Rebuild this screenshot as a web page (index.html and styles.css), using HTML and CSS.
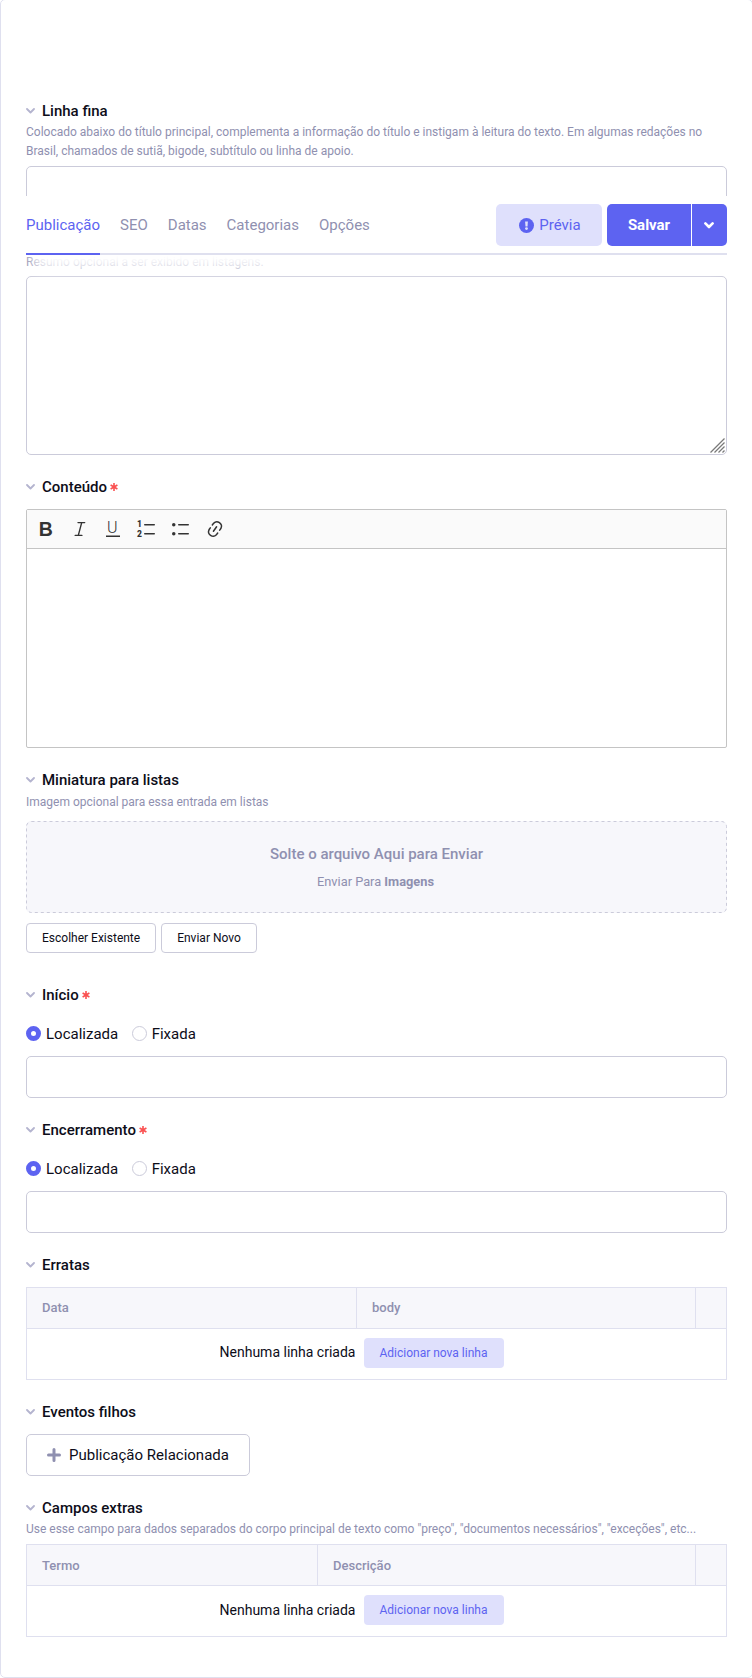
FILE: index.html
```html
<!DOCTYPE html>
<html lang="pt-BR">
<head>
<meta charset="utf-8">
<title>Publicação</title>
<link rel="stylesheet" href="styles.css">
</head>
<body>
<svg class="defs" width="0" height="0">
  <symbol id="chev" viewBox="0 0 9 6"><path d="M1 1l3.5 3.5L8 1" fill="none" stroke="currentColor" stroke-width="1.8" stroke-linecap="round" stroke-linejoin="round"/></symbol>
  <symbol id="req" viewBox="0 0 8 8"><path d="M4 0v8M.6 2l6.8 4M.6 6l6.8-4" fill="none" stroke="currentColor" stroke-width="1.6"/></symbol>
</svg>
<main class="panel">
  <section class="field">
    <h2 class="title"><svg class="chev"><use href="#chev"/></svg>Linha fina</h2>
    <p class="help">Colocado abaixo do título principal, complementa a informação do título e instigam à leitura do texto. Em algumas redações no Brasil, chamados de sutiã, bigode, subtítulo ou linha de apoio.</p>
    <input class="input" type="text">
  </section>

  <section class="field field-summary">
    <p class="help">Resumo opcional a ser exibido em listagens.</p>
    <div class="area-wrap">
      <textarea class="input area"></textarea>
      <svg class="grip" viewBox="0 0 15 15"><path d="M.5 14.5l14-14M4.5 14.5l10-10M8.5 14.5l6-6M12.5 14.5l2-2" fill="none" stroke="#7a7a7a" stroke-width="1.3"/></svg>
    </div>
  </section>

  <section class="field">
    <h2 class="title">
      <svg class="chev"><use href="#chev"/></svg>Conteúdo<svg class="req"><use href="#req"/></svg>
    </h2>
    <div class="editor">
      <div class="toolbar">
        <span class="tool"><svg viewBox="0 0 20 20"><text class="ico-b" x="2.8" y="17">B</text></svg></span>
        <span class="tool"><svg viewBox="0 0 20 20"><path d="M8 3.6h6.7M5.2 16.4h6.7M11.7 3.6L8.3 16.4" fill="none" class="thin"/></svg></span>
        <span class="tool"><svg viewBox="0 0 20 20"><text class="ico-u" x="4.1" y="13.8">U</text><path d="M3 16.5h14V18H3z"/></svg></span>
        <span class="tool"><svg viewBox="0 0 20 20"><text class="ico-n" x="0" y="8">1</text><text class="ico-n" x="0" y="18">2</text><path d="M7.75 5.75h9.5M7.75 14.75h9.5" class="line"/></svg></span>
        <span class="tool"><svg viewBox="0 0 20 20"><circle cx="2.75" cy="5.75" r="1.75"/><circle cx="2.75" cy="14.75" r="1.75"/><path d="M7.75 5.75h9.5M7.75 14.75h9.5" class="line"/></svg></span>
        <span class="tool"><svg viewBox="0 0 20 20"><path d="m11.077 15 .991-1.416a.75.75 0 1 1 1.229.86l-1.148 1.64a.748.748 0 0 1-.217.206 5.251 5.251 0 0 1-8.503-5.955.741.741 0 0 1 .12-.274l1.147-1.639a.75.75 0 1 1 1.228.86L4.933 10.7l.006.003a3.75 3.75 0 0 0 6.132 4.294l.006.004zm5.494-5.335a.748.748 0 0 1-.12.274l-1.147 1.639a.75.75 0 1 1-1.228-.86l.86-1.23a3.75 3.75 0 0 0-6.144-4.301l-.86 1.229a.75.75 0 0 1-1.229-.86l1.148-1.64a.748.748 0 0 1 .217-.206 5.251 5.251 0 0 1 8.503 5.955zm-4.563-2.532a.75.75 0 0 1 .184 1.045l-3.155 4.505a.75.75 0 1 1-1.229-.86l3.155-4.506a.75.75 0 0 1 1.045-.184z"/></svg></span>
      </div>
    </div>
  </section>

  <section class="field">
    <h2 class="title"><svg class="chev"><use href="#chev"/></svg>Miniatura para listas</h2>
    <p class="help help-file">Imagem opcional para essa entrada em listas</p>
    <div class="drop">
      <svg class="dashes" viewBox="0 0 701 92"><rect x=".5" y=".5" width="700" height="91" rx="5" fill="none" stroke="#cbcbda" stroke-dasharray="3 3"/></svg>
      <p class="drop-main">Solte o arquivo Aqui para Enviar</p>
      <p class="drop-sub">Enviar Para <b>Imagens</b></p>
    </div>
    <div class="actions">
      <button class="small">Escolher Existente</button>
      <button class="small">Enviar Novo</button>
    </div>
  </section>

  <section class="field field-after-file">
    <h2 class="title"><svg class="chev"><use href="#chev"/></svg>Início<svg class="req"><use href="#req"/></svg></h2>
    <div class="radios">
      <label class="radio"><i class="dot on"></i>Localizada</label>
      <label class="radio"><i class="dot"></i>Fixada</label>
    </div>
    <input class="input" type="text">
  </section>

  <section class="field">
    <h2 class="title"><svg class="chev"><use href="#chev"/></svg>Encerramento<svg class="req"><use href="#req"/></svg></h2>
    <div class="radios">
      <label class="radio"><i class="dot on"></i>Localizada</label>
      <label class="radio"><i class="dot"></i>Fixada</label>
    </div>
    <input class="input" type="text">
  </section>

  <section class="field">
    <h2 class="title"><svg class="chev"><use href="#chev"/></svg>Erratas</h2>
    <div class="grid">
      <div class="head head-errata"><span>Data</span><span>body</span><span></span></div>
      <div class="row"><span class="empty empty-up">Nenhuma linha criada</span><button class="add">Adicionar nova linha</button></div>
    </div>
  </section>

  <section class="field">
    <h2 class="title"><svg class="chev"><use href="#chev"/></svg>Eventos filhos</h2>
    <button class="relate"><svg class="plus" viewBox="0 0 14 14"><path d="M7 1.5v11M1.5 7h11" fill="none" stroke="currentColor" stroke-width="3" stroke-linecap="round"/></svg>Publicação Relacionada</button>
  </section>

  <section class="field">
    <h2 class="title"><svg class="chev"><use href="#chev"/></svg>Campos extras</h2>
    <p class="help">Use esse campo para dados separados do corpo principal de texto como "preço", "documentos necessários", "exceções", etc...</p>
    <div class="grid">
      <div class="head head-extra"><span>Termo</span><span>Descrição</span><span></span></div>
      <div class="row"><span class="empty">Nenhuma linha criada</span><button class="add">Adicionar nova linha</button></div>
    </div>
  </section>

  <header class="sticky">
    <nav class="tabs">
      <a class="tab active">Publicação</a><a class="tab">SEO</a><a class="tab">Datas</a><a class="tab">Categorias</a><a class="tab">Opções</a>
    </nav>
    <div class="buttons">
      <button class="preview"><svg class="alert" viewBox="0 0 15 15"><circle cx="7.5" cy="7.5" r="7.5" fill="currentColor"/><path d="M6.1 3.5h2.8l-.4 4.9h-2z" fill="#dfe0fc"/><circle cx="7.5" cy="10.6" r="1.4" fill="#dfe0fc"/></svg>Prévia</button>
      <div class="split">
        <button class="save">Salvar</button>
        <button class="more"><svg class="down" viewBox="0 0 10 7"><path d="M1.4 1.4L5 5l3.6-3.6" fill="none" stroke="currentColor" stroke-width="2.6" stroke-linecap="round" stroke-linejoin="round"/></svg></button>
      </div>
    </div>
  </header>
</main>
</body>
</html>
```
FILE: styles.css
```css
* { box-sizing: border-box; }
html { overflow: hidden; }
body {
  margin: 0;
  overflow: hidden;
  background: #fff;
  color: #0d0d19;
  font: 15px/20px Roboto, "Liberation Sans", sans-serif;
}
h2, p { margin: 0; }
button { font: inherit; color: inherit; margin: 0; padding: 0; border: 0; display: flex; align-items: center; justify-content: center; }
.defs { position: absolute; }

.panel {
  position: relative;
  width: 753px;
  height: 1679px;
  margin-top: -1px;
  padding: 101px 25px 0;
  border: 1px solid #dfe0ef;
  border-radius: 5px;
}
.field { margin-bottom: 22px; }
.title { display: flex; align-items: center; height: 20px; font-size: 15px; font-weight: 500; }
.chev { width: 9px; height: 6px; margin: 0 7px 1px 0; color: #b4b4cf; }
.req { width: 8px; height: 8px; margin-left: 3px; color: #fa5252; }
.help { margin: 2px 0 5px; font-size: 12px; line-height: 19px; color: #8f90b0; }
.input {
  display: block;
  width: 701px;
  height: 42px;
  border: 1px solid #cbcbda;
  border-radius: 5px;
  background: #fff;
  outline: 0;
}
.field-summary { padding-top: 21px; }
.field-summary .help { margin-bottom: 4px; }
.area-wrap { position: relative; width: 701px; }
.area { height: 179px; resize: none; }
.grip { position: absolute; right: 2px; bottom: 2px; width: 15px; height: 15px; }

.editor { width: 701px; height: 239px; margin-top: 12px; border: 1px solid #c4c4c4; border-radius: 2px; }
.toolbar { display: flex; align-items: center; height: 39px; padding-left: 2px; background: #fafafa; border-bottom: 1px solid #c4c4c4; }
.tool { display: flex; justify-content: center; width: 33.8px; }
.tool svg { width: 20px; height: 20px; fill: #333; overflow: visible; }
.line { stroke: #333; stroke-width: 1.5; stroke-linecap: round; }
.thin { stroke: #333; stroke-width: 1.4; stroke-linecap: round; }
.ico-b { font: bold 19.5px "Liberation Sans", sans-serif; }
.ico-u { font: 300 16px Roboto, sans-serif; }
.ico-n { font: 900 8.5px Roboto, sans-serif; }

.help-file { margin: 3px 0 9px; }
.drop {
  position: relative;
  display: flex;
  flex-direction: column;
  align-items: center;
  width: 701px;
  height: 92px;
  padding-top: 23px;
  border-radius: 5px;
  background: #f7f7fb;
  color: #8f90b0;
}
.dashes { position: absolute; top: 0; left: 0; width: 701px; height: 92px; }
.drop-main { font-weight: 500; }
.drop-sub { margin-top: 8px; padding-right: 2px; font-size: 12.8px; }
.drop-sub b { font-weight: 700; }
.actions { display: flex; gap: 5px; margin-top: 10px; }
.small { height: 30px; padding: 0 15px; border: 1px solid #cbcbda; border-radius: 4px; background: #fff; font-size: 12px; }
.field-after-file { margin-top: 32px; }

.radios { display: flex; gap: 13.5px; height: 20px; margin: 19px 0 12px; }
.radio { display: flex; align-items: center; gap: 5px; }
.dot { width: 15px; height: 15px; margin-bottom: 1px; border: 1px solid #cbcbda; border-radius: 50%; }
.dot.on { border: 5px solid #5d63f1; }

.grid { width: 701px; height: 93px; border: 1px solid #dfe0ef; }
.title + .grid { margin-top: 12px; }
.head { display: grid; height: 41px; border-bottom: 1px solid #dfe0ef; background: #f7f7fb; color: #8f90b0; font-size: 13px; font-weight: 500; line-height: 40px; }
.head-errata { grid-template-columns: 329px 339px 31px; }
.head-extra { grid-template-columns: 290px 378px 31px; line-height: 42px; }
.head span { padding-left: 15px; height: 40px; }
.head span + span { border-left: 1px solid #dfe0ef; }
.row { display: flex; justify-content: center; align-items: flex-start; gap: 9px; padding: 9px 29px 0 0; font-size: 14px; }
.empty { line-height: 30px; }
.empty-up { margin-top: -1px; }
.add { width: 140px; height: 30px; padding-right: 2px; border-radius: 4px; background: #dfe0fc; color: #5d63f1; font-size: 12px; }

.relate { width: 224px; height: 42px; margin-top: 12px; border: 1px solid #cbcbda; border-radius: 5px; background: #fff; }
.plus { width: 14px; height: 14px; margin-right: 8px; color: #8f90b0; }

/* publish bar pinned over the scrolled form */
.sticky {
  position: absolute;
  top: 196px;
  left: 25px;
  display: flex;
  justify-content: space-between;
  width: 701px;
  height: 59px;
  background: #fff;
  border-bottom: 2px solid #dfe0ef;
  box-shadow: 0 22px 14px -7px #fff;
}
.tabs { display: flex; gap: 20px; height: 59px; }
.tab { height: 59px; line-height: 58px; color: #8f90b0; }
.tab.active { color: #5d63f1; border-bottom: 2px solid #5d63f1; }
.buttons { display: flex; gap: 5px; padding-top: 8px; }
.preview { width: 106px; height: 42px; padding-left: 2px; border-radius: 5px; background: #dfe0fc; color: #5d63f1; }
.alert { width: 15px; height: 15px; margin-right: 5px; }
.split { display: flex; gap: 1px; height: 42px; color: #fff; }
.save { width: 84px; border-radius: 5px 0 0 5px; background: #5d63f1; font-weight: 700; }
.more { width: 35px; padding-right: 1px; border-radius: 0 5px 5px 0; background: #5d63f1; }
.down { width: 10px; height: 7px; }
```
